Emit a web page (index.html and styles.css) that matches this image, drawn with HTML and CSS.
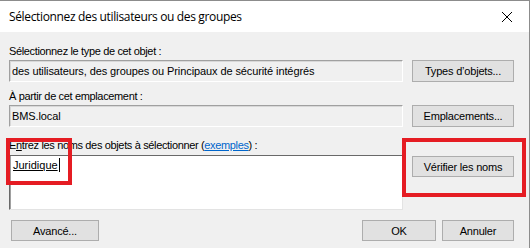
FILE: index.html
```html
<!DOCTYPE html>
<html lang="fr">
  <head>
    <meta charset="UTF-8">
    <title>Sélectionnez des utilisateurs ou des groupes</title>
    <link rel="stylesheet" href="styles.css">
  </head>
  <body>
    <div class="window">
      <div class="titlebar">
        <span class="title">Sélectionnez des utilisateurs ou des groupes</span>
        <svg class="close" width="12" height="12" viewBox="0 0 12 12">
          <path d="M1 1 L11 11 M11 1 L1 11" stroke="#000" stroke-width="1" fill="none"/>
        </svg>
      </div>
      <div class="content">
        <div class="label">Sélectionnez le type de cet objet :</div>
        <div class="row">
          <div class="field">des utilisateurs, des groupes ou Principaux de sécurité intégrés</div>
          <button class="btn">Types d’objets...</button>
        </div>
        <div class="label">À partir de cet emplacement :</div>
        <div class="row">
          <div class="field">BMS.local</div>
          <button class="btn">Emplacements...</button>
        </div>
        <div class="label label-names">E<u>n</u>trez les noms des objets à sélectionner (<a href="#">exemples</a>) :</div>
        <div class="row row-names">
          <div class="names"><span class="name">Juridique</span><span class="caret"></span></div>
          <div class="check-col">
            <button class="btn">Vérifier les noms</button>
          </div>
        </div>
        <div class="footer">
          <button class="btn btn-adv">Avancé...</button>
          <div class="footer-right">
            <button class="btn btn-ok">OK</button>
            <button class="btn btn-cancel">Annuler</button>
          </div>
        </div>
      </div>
      <div class="mark mark-1"></div>
      <div class="mark mark-2"></div>
    </div>
  </body>
</html>
```

FILE: styles.css
```css
* { box-sizing: border-box; margin: 0; padding: 0; }
body {
  font-family: "Liberation Sans", Arial, sans-serif;
  font-size: 11px;
  color: #000;
  background: #f0f0f0;
}
.window {
  position: relative;
  width: 530px;
  height: 248px;
  background: #f0f0f0;
  border-top: 1px solid #8c8c8c;
  border-right: 1px solid #8c8c8c;
  overflow: hidden;
}
.titlebar {
  height: 31px;
  background: #fff;
  display: flex;
  align-items: center;
  justify-content: space-between;
  padding: 0 16px 0 9px;
}
.title {
  font-family: "Open Sans", "Noto Sans", sans-serif;
  font-size: 12px;
  letter-spacing: -0.35px;
}
.content {
  padding: 11px 15px 0 9px;
}
.label {
  height: 17px;
  line-height: 16px;
  letter-spacing: -0.35px;
}
.label a {
  color: #0066cc;
}
.row {
  display: flex;
  gap: 9px;
  margin-bottom: 6px;
}
.field {
  width: 394px;
  height: 22px;
  padding: 3px 2px;
  line-height: 14px;
  letter-spacing: -0.1px;
  background: #f0f0f0;
  border: 1px solid;
  border-color: #a0a0a0 #fff #fff #a0a0a0;
  box-shadow: inset 1px 1px 0 #d8d8d8;
}
.btn {
  width: 102px;
  height: 22px;
  font-family: "Liberation Sans", Arial, sans-serif;
  font-size: 11px;
  letter-spacing: -0.2px;
  color: #000;
  background: #e1e1e1;
  border: 1px solid #adadad;
}
.label-names {
  margin-top: 11px;
  height: 17px;
  line-height: 14px;
}
.row-names {
  margin-bottom: 10px;
}
.names {
  width: 394px;
  height: 55px;
  background: #fff;
  border: 1px solid;
  border-color: #696969 #e3e3e3 #e3e3e3 #696969;
  box-shadow: inset 1px 0 0 #a0a0a0;
  padding: 2px 3px;
  line-height: 14px;
  display: flex;
  align-items: flex-start;
}
.name {
  text-decoration: underline;
}
.caret {
  width: 1px;
  height: 14px;
  margin-left: 1px;
  background: #000;
}
.check-col {
  padding-top: 1px;
}
.check-col .btn {
  height: 21px;
}
.footer {
  display: flex;
  justify-content: space-between;
  padding-left: 2px;
}
.footer .btn {
  height: 21px;
}
.btn-adv {
  width: 88px;
}
.footer-right {
  display: flex;
  gap: 6px;
}
.btn-ok {
  width: 74px;
}
.btn-cancel {
  width: 72px;
}
.mark {
  position: absolute;
  border: 4px solid #e51c23;
}
.mark-1 {
  left: 6px;
  top: 137px;
  width: 66px;
  height: 47px;
}
.mark-2 {
  left: 402px;
  top: 137px;
  width: 124px;
  height: 59px;
}
```
